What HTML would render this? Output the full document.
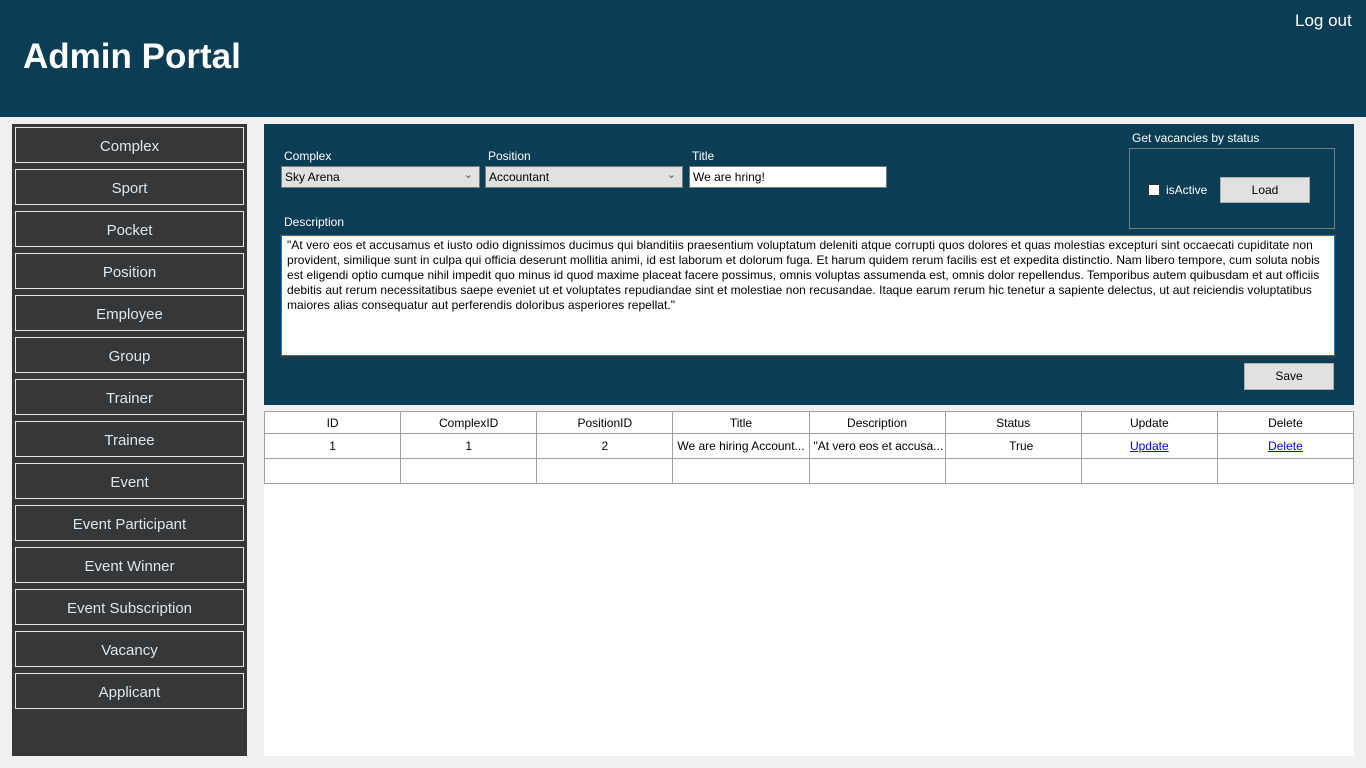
<!DOCTYPE html>
<html><head><meta charset="utf-8"><style>
*{box-sizing:border-box;margin:0;padding:0}
body{width:1366px;height:768px;background:#f0f0f0;font-family:"Liberation Sans",sans-serif;position:relative;overflow:hidden}
.hdr{position:absolute;left:0;top:0;width:1366px;height:117px;background:#0b3d54}
.hdr h1{position:absolute;left:23px;top:37px;font-size:35px;color:#fff;font-weight:bold}
.logout{position:absolute;left:1295px;top:11px;color:#fff;font-size:17px}
.side{position:absolute;left:12px;top:124px;width:235px;height:632px;background:#363739}
.btn{position:absolute;left:3px;width:229px;height:36px;border:1.5px solid #e6e6e6;color:#dfe6ea;font-size:15px;text-align:center;line-height:37px}
.panel{position:absolute;left:264px;top:124px;width:1090px;height:281px;background:#0b3d54;color:#fff;font-size:12px}
.lbl{position:absolute;font-size:12px;color:#fff}
.sel{position:absolute;height:22px;background:#e1e1e1;border:1px solid #7a7a7a;color:#000;font-size:12px;padding:3px 3px;}
.sel span{position:absolute;right:6px;top:1px;font-size:11px;color:#555}
.inp{position:absolute;height:22px;background:#fff;border:1px solid #7a7a7a;color:#000;font-size:12px;padding:3px 3px}
.ta{position:absolute;left:17px;top:111px;width:1054px;height:121px;background:#fff;border:1px solid #0078d7;color:#000;font-size:12px;line-height:15px;padding:2px 5px;white-space:nowrap;letter-spacing:0.04px;overflow:hidden}
.grp{position:absolute;left:865px;top:24px;width:206px;height:81px;border:1px solid #7a7a7a}
.wbtn{position:absolute;background:#e1e1e1;border:1px solid #adadad;color:#000;font-size:12px;text-align:center}
.tbl{position:absolute;left:264px;top:411px;width:1090px;height:345px;background:#fff}
table{border-collapse:collapse;width:1090px;table-layout:fixed;font-size:12px;color:#000}
td{border:1px solid #a0a0a0;text-align:center;white-space:nowrap;overflow:hidden;padding:0 4px}
a{color:#00e;text-decoration:underline}
</style></head><body>
<div class="hdr"><h1>Admin Portal</h1><div class="logout">Log out</div></div>
<div class="side">
<div class="btn" style="top:3px">Complex</div>
<div class="btn" style="top:45px">Sport</div>
<div class="btn" style="top:87px">Pocket</div>
<div class="btn" style="top:129px">Position</div>
<div class="btn" style="top:171px">Employee</div>
<div class="btn" style="top:213px">Group</div>
<div class="btn" style="top:255px">Trainer</div>
<div class="btn" style="top:297px">Trainee</div>
<div class="btn" style="top:339px">Event</div>
<div class="btn" style="top:381px">Event Participant</div>
<div class="btn" style="top:423px">Event Winner</div>
<div class="btn" style="top:465px">Event Subscription</div>
<div class="btn" style="top:507px">Vacancy</div>
<div class="btn" style="top:549px">Applicant</div>
</div>
<div class="panel">
<div class="lbl" style="left:20px;top:25px">Complex</div>
<div class="lbl" style="left:224px;top:25px">Position</div>
<div class="lbl" style="left:428px;top:25px">Title</div>
<div class="sel" style="left:17px;top:42px;width:199px">Sky Arena<span>&#8964;</span></div>
<div class="sel" style="left:221px;top:42px;width:198px">Accountant<span>&#8964;</span></div>
<div class="inp" style="left:425px;top:42px;width:198px">We are hring!</div>
<div class="lbl" style="left:20px;top:91px">Description</div>
<div class="ta">"At vero eos et accusamus et iusto odio dignissimos ducimus qui blanditiis praesentium voluptatum deleniti atque corrupti quos dolores et quas molestias excepturi sint occaecati cupiditate non<br>provident, similique sunt in culpa qui officia deserunt mollitia animi, id est laborum et dolorum fuga. Et harum quidem rerum facilis est et expedita distinctio. Nam libero tempore, cum soluta nobis<br>est eligendi optio cumque nihil impedit quo minus id quod maxime placeat facere possimus, omnis voluptas assumenda est, omnis dolor repellendus. Temporibus autem quibusdam et aut officiis<br>debitis aut rerum necessitatibus saepe eveniet ut et voluptates repudiandae sint et molestiae non recusandae. Itaque earum rerum hic tenetur a sapiente delectus, ut aut reiciendis voluptatibus<br>maiores alias consequatur aut perferendis doloribus asperiores repellat."</div>
<div class="lbl" style="left:868px;top:7px">Get vacancies by status</div>
<div class="grp">
<div style="position:absolute;left:18px;top:35px;width:12px;height:12px;background:#fff;border:1px solid #333"></div>
<div class="lbl" style="left:36px;top:34px">isActive</div>
<div class="wbtn" style="left:90px;top:28px;width:90px;height:26px;line-height:24px">Load</div>
</div>
<div class="wbtn" style="left:980px;top:239px;width:90px;height:27px;line-height:25px">Save</div>
</div>
<div class="tbl"><table>
<tr style="height:22px"><td>ID</td><td>ComplexID</td><td>PositionID</td><td>Title</td><td>Description</td><td>Status</td><td>Update</td><td>Delete</td></tr>
<tr style="height:25px"><td>1</td><td>1</td><td>2</td><td style="text-align:left">We are hiring Account...</td><td style="text-align:left">"At vero eos et accusa...</td><td style="padding-left:20px">True</td><td><a>Update</a></td><td><a>Delete</a></td></tr>
<tr style="height:25px"><td></td><td></td><td></td><td></td><td></td><td></td><td></td><td></td></tr>
</table></div>
</body></html>
